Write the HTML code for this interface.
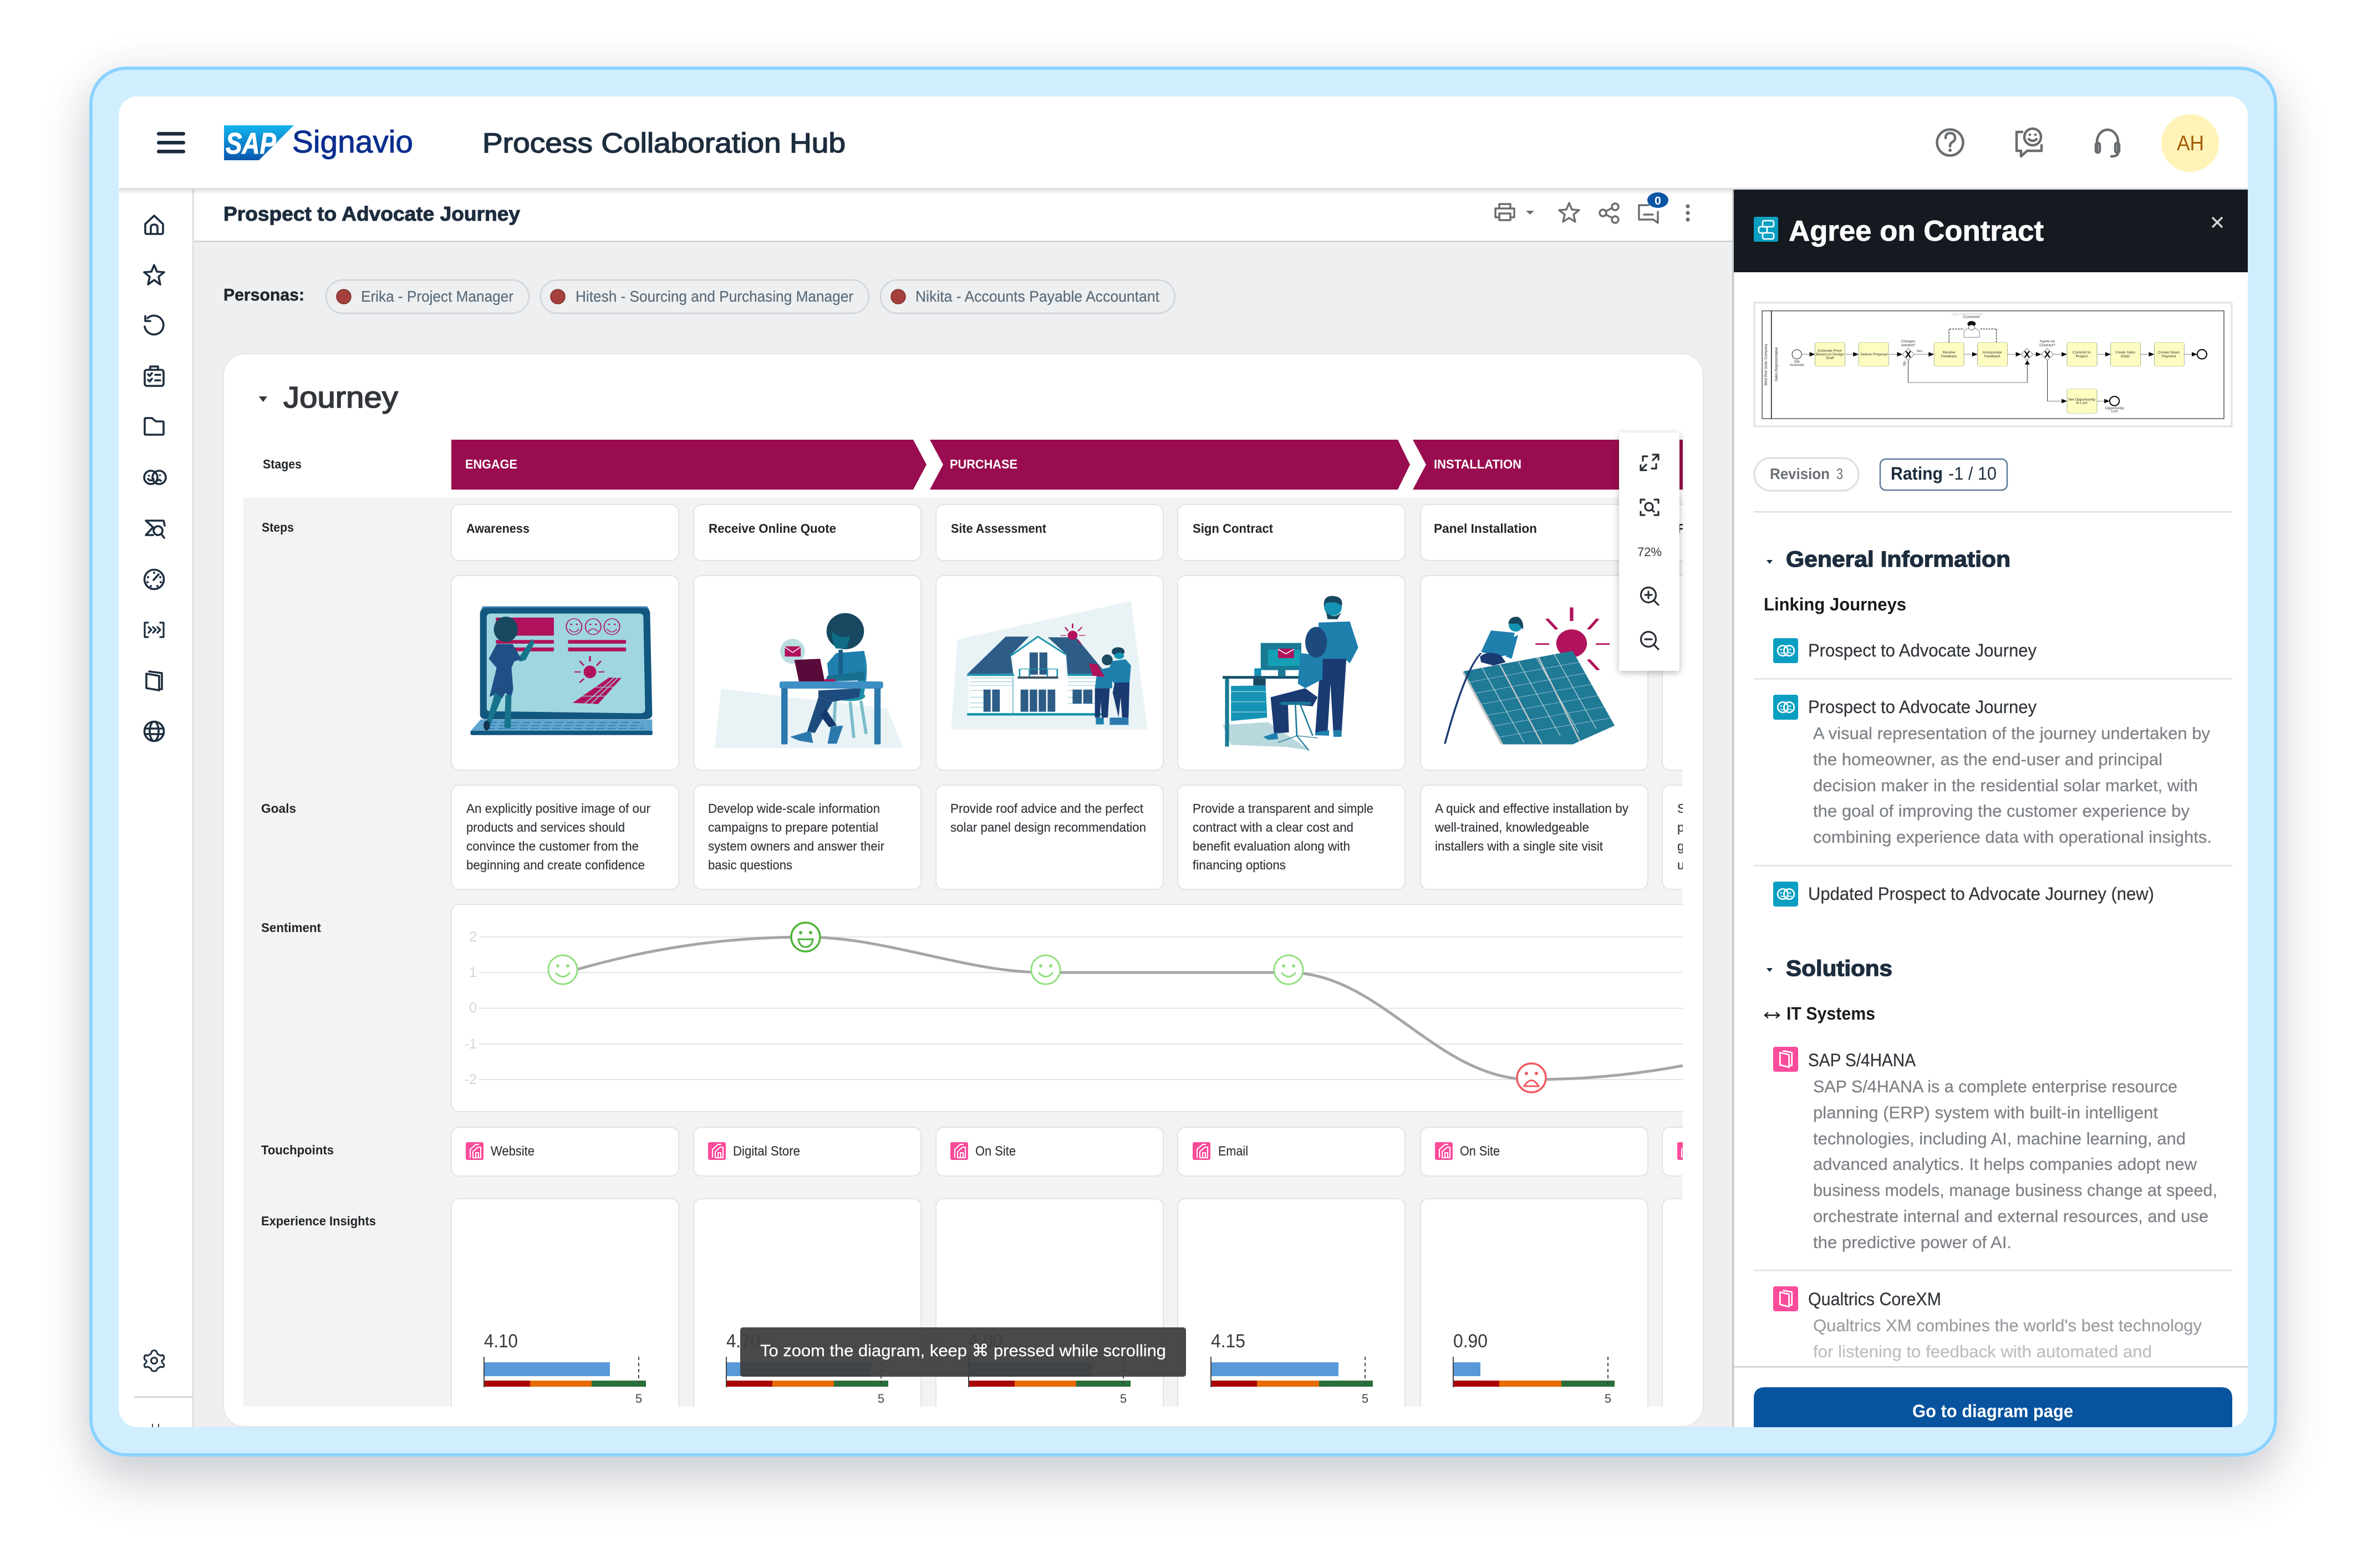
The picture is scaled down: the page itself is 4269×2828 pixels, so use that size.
<!DOCTYPE html>
<html lang="en"><head><meta charset="utf-8"><title>Process Collaboration Hub</title>
<style>
html,body{margin:0;padding:0;background:#fff;width:4269px;height:2828px;overflow:hidden}
#s{position:absolute;left:161px;top:120px;width:3946px;height:2507px;border-radius:66px;box-shadow:0 44px 90px rgba(60,70,85,.24),0 0 70px rgba(60,70,85,.08)}
svg{position:absolute;left:0;top:0}
text{font-family:"Liberation Sans","DejaVu Sans",sans-serif}
.b{font-weight:700}
.lab{font-size:23px;font-weight:700;fill:#1f2428}
.st{font-size:23px;font-weight:700;fill:#fff}
.step{font-size:23px;font-weight:700;fill:#1f2428}
.g{font-size:23px;fill:#32363a;stroke:#32363a;stroke-width:.2}
.tp{font-size:24px;fill:#32363a;stroke:#32363a;stroke-width:.2}
.v{font-size:34px;fill:#3a3a3a}
.five{font-size:22px;fill:#444;text-anchor:middle}
.ax{font-size:25px;fill:#d5d5d5;text-anchor:end}
.chip{font-size:28px;fill:#5b6b78;stroke:#5b6b78;stroke-width:.2}
.r{font-size:32px;fill:#32363a;stroke:#32363a;stroke-width:.25}
.d{font-size:31px;fill:#7d8186;stroke:#7d8186;stroke-width:.25}
.h2{font-size:40px;font-weight:700;fill:#1d2d3e;stroke:#1d2d3e;stroke-width:1.3}
.h3{font-size:32px;font-weight:700;fill:#1a1a1a}
.ic{fill:none;stroke:#1d2d3e;stroke-width:3.6;stroke-linecap:round;stroke-linejoin:round}
.tb{fill:none;stroke:#6a6d70;stroke-width:3.4;stroke-linecap:round;stroke-linejoin:round}
.fl{fill:none;stroke:#2a2f35;stroke-width:3.2;stroke-linecap:round;stroke-linejoin:round}
.dg{font-size:19px;fill:#333;text-anchor:middle}
.task{fill:#fdfdc2;stroke:#8e8e6e;stroke-width:1.2;vector-effect:non-scaling-stroke}
.ln{fill:none;stroke:#000;stroke-width:1.4;vector-effect:non-scaling-stroke}
.card{fill:#fff;stroke:#e3e3e3;stroke-width:2}
</style></head>
<body>
<div id="s"></div>
<svg xmlns="http://www.w3.org/2000/svg" width="4269" height="2828" viewBox="0 0 4269 2828">
<defs>
<linearGradient id="sap" x1="0" y1="0" x2="0" y2="1"><stop offset="0" stop-color="#12b4ee"/><stop offset="1" stop-color="#0a56ad"/></linearGradient>
<linearGradient id="hs" x1="0" y1="0" x2="0" y2="1"><stop offset="0" stop-color="#000" stop-opacity=".14"/><stop offset="1" stop-color="#000" stop-opacity="0"/></linearGradient>
<filter id="fs" x="-20%" y="-10%" width="140%" height="120%"><feDropShadow dx="0" dy="3" stdDeviation="6" flood-color="#000" flood-opacity=".28"/></filter>
<clipPath id="inner"><rect x="214" y="174" width="3840" height="2400" rx="34"/></clipPath>
<clipPath id="grid"><rect x="439" y="780" width="2596" height="1757"/></clipPath>
<clipPath id="pan"><polygon points="1075,565 1295,475 1380,805 1295,888 1155,888"/></clipPath>
<clipPath id="panelc"><rect x="3127" y="342" width="927" height="2123"/></clipPath>
<symbol id="jw" overflow="visible" viewBox="-22 -22 44 44"><g fill="none" stroke="#fff" stroke-width="2.6"><circle cx="-5" cy="0" r="9"/><circle cx="6" cy="0" r="9"/></g><g fill="#fff"><circle cx="-8" cy="-2" r="1.5"/><circle cx="-3" cy="-2" r="1.5"/><circle cx="8" cy="-2" r="1.5"/></g><path d="M-9 3q4 3 8 0M5 5q3-3 6 0" fill="none" stroke="#fff" stroke-width="1.6"/></symbol>
<symbol id="bk" overflow="visible" viewBox="-22 -22 44 44"><path d="M-10-12L6-8V14L-10 10ZM-5-15L11-12V11H6" fill="none" stroke="#fff" stroke-width="2.6" stroke-linejoin="round"/></symbol>
<symbol id="tp" overflow="visible" viewBox="-16 -16 32 32"><path d="M-8 12V-3L2-12H8M-3 12V1L6-7H11V12H-3ZM2 12V3H7V12" fill="none" stroke="#fff" stroke-width="2" stroke-linejoin="round"/></symbol>
<symbol id="fs1" overflow="visible" viewBox="-30 -30 60 60"><circle r="26" fill="#fff" stroke="#90e07e" stroke-width="3"/><circle cx="-9" cy="-7" r="3" fill="#90e07e"/><circle cx="9" cy="-7" r="3" fill="#90e07e"/><path d="M-13 5Q0 20 13 5" fill="none" stroke="#90e07e" stroke-width="3"/></symbol>
</defs>

<!-- frame -->
<rect x="164" y="123" width="3940" height="2501" rx="64" fill="#d1eeff" stroke="#8bd2ff" stroke-width="6"/>
<rect x="214" y="174" width="3840" height="2400" rx="34" fill="#fff"/>

<g clip-path="url(#inner)">
<!-- main background -->
<rect x="350" y="341" width="2777" height="2240" fill="#edeff1"/>
<rect x="347" y="341" width="2.5" height="2240" fill="#d9d9d9"/>
<!-- subheader -->
<rect x="350" y="341" width="2777" height="94" fill="#fff"/>
<rect x="350" y="434" width="2777" height="2.5" fill="#cfd0d1"/>
<text x="403" y="398" class="b" font-size="36" fill="#1d2d3e" stroke="#1d2d3e" stroke-width="1" textLength="535" lengthAdjust="spacingAndGlyphs">Prospect to Advocate Journey</text>
<!-- toolbar icons -->
<g class="tb" transform="translate(2714,383)"><path d="M-10-7V-15H10V-7M-10 9H-17V-7H17V9H10"/><rect x="-10" y="2" width="20" height="12"/></g>
<polygon points="2752,380 2767,380 2759.5,387" fill="#6a6d70"/>
<polygon class="tb" transform="translate(2830,384)" points="0,-18 5,-6 18,-5 8,3 11,16 0,9 -11,16 -8,3 -18,-5 -5,-6"/>
<g class="tb" transform="translate(2902,384)"><circle cx="-11" cy="0" r="6"/><circle cx="11" cy="-11" r="6"/><circle cx="11" cy="12" r="6"/><path d="M-6-3L6-9M-6 3L6 9"/></g>
<g class="tb" transform="translate(2973,384)"><path d="M-17 12V-14H0M-17 12H9L17 18V-2M9-14"/><path d="M-8 3H8"/></g>
<ellipse cx="2990" cy="361" rx="19" ry="14" fill="#0a55a6"/><text x="2990" y="369" text-anchor="middle" class="b" font-size="21" fill="#fff">0</text>
<g fill="#6a6d70"><circle cx="3044" cy="372" r="3.6"/><circle cx="3044" cy="384" r="3.6"/><circle cx="3044" cy="396" r="3.6"/></g>

<!-- personas -->
<text x="403" y="542" class="b" font-size="31" fill="#22272b" stroke="#22272b" stroke-width=".5" textLength="146" lengthAdjust="spacingAndGlyphs">Personas:</text>
<g fill="none" stroke="#d2d5d8" stroke-width="2.5"><rect x="588" y="505" width="366" height="60" rx="30"/><rect x="975" y="505" width="592" height="60" rx="30"/><rect x="1588" y="505" width="531" height="60" rx="30"/></g>
<g fill="#a5403d" stroke="#7f2f2d" stroke-width="1.5"><circle cx="620" cy="535" r="13"/><circle cx="1006" cy="535" r="13"/><circle cx="1620" cy="535" r="13"/></g>
<text x="651" y="544" class="chip" textLength="275" lengthAdjust="spacingAndGlyphs">Erika - Project Manager</text>
<text x="1038" y="544" class="chip" textLength="501" lengthAdjust="spacingAndGlyphs">Hitesh - Sourcing and Purchasing Manager</text>
<text x="1651" y="544" class="chip" textLength="440" lengthAdjust="spacingAndGlyphs">Nikita - Accounts Payable Accountant</text>

<!-- journey card -->
<rect x="403" y="638" width="2669" height="1935" rx="38" fill="#fff" stroke="#e4e5e6" stroke-width="2"/>
<polygon points="467,715 482,715 474.5,725" fill="#32363a"/>
<text x="511" y="735" font-size="54" fill="#32363a" stroke="#32363a" stroke-width="1.6" textLength="207" lengthAdjust="spacingAndGlyphs">Journey</text>
<text x="474" y="845" class="lab" textLength="70" lengthAdjust="spacingAndGlyphs">Stages</text>

<g clip-path="url(#grid)">
<rect x="439" y="897" width="2596" height="1640" fill="#f3f3f3"/>
<polygon points="814,793 1647,793 1671,838 1647,883 814,883" fill="#990c4f"/>
<polygon points="1677,793 2521,793 2543,838 2521,883 1677,883 1701,838" fill="#990c4f"/>
<polygon points="2548,793 3040,793 3040,883 2548,883 2572,838" fill="#990c4f"/>
<text x="839" y="845" class="st" textLength="94" lengthAdjust="spacingAndGlyphs">ENGAGE</text>
<text x="1713" y="845" class="st" textLength="122" lengthAdjust="spacingAndGlyphs">PURCHASE</text>
<text x="2586" y="845" class="st" textLength="158" lengthAdjust="spacingAndGlyphs">INSTALLATION</text>

<text x="472" y="959" class="lab" textLength="58" lengthAdjust="spacingAndGlyphs">Steps</text>
<text x="471" y="1466" class="lab" textLength="63" lengthAdjust="spacingAndGlyphs">Goals</text>
<text x="471" y="1681" class="lab" textLength="108" lengthAdjust="spacingAndGlyphs">Sentiment</text>
<text x="471" y="2082" class="lab" textLength="131" lengthAdjust="spacingAndGlyphs">Touchpoints</text>
<text x="471" y="2210" class="lab" textLength="207" lengthAdjust="spacingAndGlyphs">Experience Insights</text>

<!-- step cards -->
<g class="card">
<rect x="814" y="910" width="410" height="101" rx="14"/><rect x="1251" y="910" width="410" height="101" rx="14"/><rect x="1688" y="910" width="410" height="101" rx="14"/><rect x="2124" y="910" width="410" height="101" rx="14"/><rect x="2562" y="910" width="410" height="101" rx="14"/><rect x="2998" y="910" width="410" height="101" rx="14"/>
<rect x="814" y="1038" width="410" height="351" rx="14"/><rect x="1251" y="1038" width="410" height="351" rx="14"/><rect x="1688" y="1038" width="410" height="351" rx="14"/><rect x="2124" y="1038" width="410" height="351" rx="14"/><rect x="2562" y="1038" width="410" height="351" rx="14"/><rect x="2998" y="1038" width="410" height="351" rx="14"/>
<rect x="814" y="1416" width="410" height="188" rx="14"/><rect x="1251" y="1416" width="410" height="188" rx="14"/><rect x="1688" y="1416" width="410" height="188" rx="14"/><rect x="2124" y="1416" width="410" height="188" rx="14"/><rect x="2562" y="1416" width="410" height="188" rx="14"/><rect x="2998" y="1416" width="410" height="188" rx="14"/>
<rect x="814" y="1631" width="2300" height="374" rx="14"/>
<rect x="814" y="2033" width="410" height="88" rx="14"/><rect x="1251" y="2033" width="410" height="88" rx="14"/><rect x="1688" y="2033" width="410" height="88" rx="14"/><rect x="2124" y="2033" width="410" height="88" rx="14"/><rect x="2562" y="2033" width="410" height="88" rx="14"/><rect x="2998" y="2033" width="410" height="88" rx="14"/>
<rect x="814" y="2162" width="410" height="420" rx="14"/><rect x="1251" y="2162" width="410" height="420" rx="14"/><rect x="1688" y="2162" width="410" height="420" rx="14"/><rect x="2124" y="2162" width="410" height="420" rx="14"/><rect x="2562" y="2162" width="410" height="420" rx="14"/><rect x="2998" y="2162" width="410" height="420" rx="14"/>
</g>
<text x="841" y="961" class="step" textLength="114" lengthAdjust="spacingAndGlyphs">Awareness</text>
<text x="1278" y="961" class="step" textLength="230" lengthAdjust="spacingAndGlyphs">Receive Online Quote</text>
<text x="1715" y="961" class="step" textLength="172" lengthAdjust="spacingAndGlyphs">Site Assessment</text>
<text x="2151" y="961" class="step" textLength="145" lengthAdjust="spacingAndGlyphs">Sign Contract</text>
<text x="2586" y="961" class="step" textLength="186" lengthAdjust="spacingAndGlyphs">Panel Installation</text>
<text x="3025" y="961" class="step">F</text>

<!-- illustration 1 -->
<g transform="translate(800,780) scale(.63776,.40816)">
<polygon points="112,768 575,768 582,780 105,780" fill="#3d84b0"/>
<path d="M125 775H565Q584 775 584 800L590 1245Q590 1267 570 1267H120Q103 1267 103 1245V800Q103 775 125 775Z" fill="#125780"/>
<path d="M135 800H552Q565 800 565 815L570 1225Q570 1241 555 1241L135 1232Q122 1232 122 1220V815Q122 800 135 800Z" fill="#9fd6e0"/>
<polygon points="105,1268 590,1268 590,1320 76,1320" fill="#5ea5d0"/>
<rect x="76" y="1318" width="515" height="19" rx="5" fill="#125780"/>
<g stroke="#2f6f99" stroke-width="3" stroke-dasharray="22 9"><path d="M130 1282H565M125 1295H565M122 1308H565"/></g>
<g fill="#b0125b"><rect x="148" y="818" width="164" height="80" rx="3"/><rect x="148" y="917" width="164" height="16" rx="2"/><rect x="148" y="950" width="164" height="17" rx="2"/><rect x="352" y="917" width="164" height="16" rx="2"/><rect x="352" y="950" width="164" height="17" rx="2"/><ellipse cx="414" cy="1058" rx="18" ry="28"/></g>
<g fill="none" stroke="#b0125b" stroke-width="3"><ellipse cx="369" cy="858" rx="22" ry="35"/><ellipse cx="423" cy="858" rx="22" ry="35"/><ellipse cx="476" cy="858" rx="22" ry="35"/><path d="M355 868Q369 895 383 868M409 880Q423 855 437 880M462 868Q476 895 490 868"/></g>
<g fill="#b0125b"><circle cx="361" cy="848" r="3"/><circle cx="377" cy="848" r="3"/><circle cx="415" cy="848" r="3"/><circle cx="431" cy="848" r="3"/><circle cx="468" cy="848" r="3"/><circle cx="484" cy="848" r="3"/></g>
<g stroke="#b0125b" stroke-width="5" fill="none"><path d="M414 988V1012M445 1010L433 1030M385 1010L397 1030M370 1058H388M438 1058H455M385 1105L397 1088"/></g>
<polygon points="365,1195 437,1200 503,1085 468,1083" fill="#b0125b"/>
<g stroke="#9fd6e0" stroke-width="3"><path d="M398 1200L482 1084M417 1200L493 1084M386 1165L475 1165M404 1125L490 1125"/></g>
<path d="M208 1005L250 912L257 930L232 1005L218 1012Z" fill="#17748a"/>
<polygon points="150,935 195,935 220,1000 200,1012 192,1040 150,1040 128,1000" fill="#1f4f85"/>
<polygon points="150,1040 192,1040 197,1135 190,1178 175,1150 165,1175 150,1155 130,1168" fill="#1f4f85"/>
<polygon points="145,1150 118,1300 130,1300 165,1172" fill="#17748a"/>
<polygon points="175,1160 172,1300 190,1300 192,1160" fill="#17748a"/>
<ellipse cx="122" cy="1295" rx="9" ry="22" fill="#14344f"/><ellipse cx="181" cy="1298" rx="10" ry="10" fill="#17748a"/>
<ellipse cx="176" cy="870" rx="34" ry="56" fill="#17485f"/>
</g>

<!-- illustration 2 -->
<g transform="translate(800,780) scale(.63776,.40816)">
<polygon points="785,1132 1255,1220 1300,1395 767,1395" fill="#e9f3f6"/>
<g stroke="#7dbdc8" stroke-width="9" fill="none"><path d="M1108 1185L1104 1295M1150 1190L1160 1350M1180 1185L1195 1332"/></g>
<ellipse cx="1150" cy="1165" rx="42" ry="22" fill="#1f8fa8"/>
<path d="M1190 975Q1205 1040 1188 1160L1170 1165L1175 975Z" fill="#1f8fa8"/>
<polygon points="1110,975 1190,965 1195,1095 1090,1100 1085,1020" fill="#1f7fad"/>
<path d="M1123 960V1095" stroke="#1a5f8a" stroke-width="12"/>
<path d="M1085 1075L1190 1055V1095L1080 1100Z" fill="#176f8f"/>
<polygon points="1060,1140 1180,1130 1175,1170 1100,1190 1060,1170" fill="#1d4b7e"/>
<polygon points="1060,1170 1028,1322 1050,1328 1100,1190" fill="#1d4b7e"/>
<polygon points="1080,1220 1112,1295 1090,1302 1065,1250" fill="#153a6e"/>
<polygon points="980,1345 1038,1318 1045,1372 1005,1362" fill="#2b78ad"/>
<polygon points="1095,1300 1130,1295 1112,1375 1086,1375" fill="#2b78ad"/>
<rect x="950" y="1100" width="293" height="32" rx="8" fill="#3d8fc6"/>
<rect x="955" y="1130" width="18" height="248" rx="3" fill="#2b78ad"/><rect x="1218" y="1130" width="18" height="248" rx="3" fill="#2b78ad"/>
<ellipse cx="987" cy="967" rx="35" ry="55" fill="#b9dde0"/>
<rect x="965" y="945" width="45" height="45" rx="3" fill="#b0125b"/><path d="M965 948L987 972L1010 948" fill="none" stroke="#fff" stroke-width="3"/>
<polygon points="992,1005 1065,1000 1078,1100 1005,1100" fill="#5a0a3a"/>
<rect x="1078" y="1090" width="30" height="10" fill="#b0125b"/>
<ellipse cx="1136" cy="878" rx="53" ry="80" fill="#17485f"/>
<path d="M1098 880Q1125 915 1150 900L1140 955H1110Q1098 930 1098 880Z" fill="#0f6e85"/>
</g>

<!-- illustration 3 -->
<g transform="translate(1680,980) scale(.89286,.40816)">
<polygon points="52,425 403,255 436,822 40,822" fill="#e9f3f6"/>
<rect x="75" y="578" width="265" height="172" fill="#fff"/>
<polygon points="165,490 215,410 270,490 270,750 165,750" fill="#fff"/>
<g stroke="#9fcdd8" stroke-width="3"><path d="M78 595H165M78 612H165M78 628H165M78 650H105M78 680H105M78 705H105M78 725H105M275 595H340M275 612H340M275 628H340M275 650H285M275 680H285M275 708H340"/></g>
<polygon points="150,412 197,412 160,495 165,575 72,578" fill="#2d5c87"/>
<polygon points="235,415 292,415 345,555 345,580 275,578 272,490" fill="#2d5c87"/>
<path d="M160 497L215 412L272 492" fill="none" stroke="#2096b0" stroke-width="5"/>
<rect x="72" y="576" width="95" height="10" fill="#2096b0"/><rect x="275" y="576" width="65" height="10" fill="#2096b0"/>
<rect x="198" y="482" width="36" height="98" fill="#2d5c87"/><rect x="215" y="482" width="3" height="98" fill="#fff"/>
<path d="M178 555H254M178 555V590M254 555V590M198 555V590M234 555V590" stroke="#2096b0" stroke-width="3" fill="none"/><rect x="174" y="588" width="82" height="10" fill="#456"/>
<g fill="#2d5c87"><rect x="105" y="646" width="33" height="98"/><rect x="180" y="646" width="70" height="98"/><rect x="285" y="646" width="40" height="62"/></g>
<g stroke="#fff" stroke-width="3"><path d="M121 646V744M197 646V744M215 646V744M233 646V744M305 646V708"/></g>
<rect x="72" y="750" width="285" height="11" fill="#1a94ad"/><rect x="163" y="590" width="3" height="160" fill="#9fcdd8"/>
<ellipse cx="285" cy="406" rx="10" ry="20" fill="#b0125b"/>
<g stroke="#b0125b" stroke-width="3"><path d="M285 354V375M270 370L276 388M304 370L296 388M261 407H272M298 407H310M295 425L302 445"/></g>
<ellipse cx="355" cy="515" rx="11" ry="24" fill="#1c4a60"/>
<polygon points="335,560 365,545 365,640 330,640" fill="#1f7fad"/>
<polygon points="330,640 360,640 356,770 344,770 342,700 340,770 330,770" fill="#1a3a72"/>
<rect x="332" y="770" width="16" height="30" fill="#1f7fad"/>
<polygon points="318,530 335,535 350,590 325,585" fill="#b0125b"/>
<polygon points="365,520 392,512 403,540 400,618 368,618 355,570" fill="#1f7fad"/>
<polygon points="370,615 400,615 398,770 385,770 382,680 378,770 366,660" fill="#1a3a72"/>
<ellipse cx="377" cy="478" rx="13" ry="19" fill="#17485f"/><ellipse cx="379" cy="497" rx="10" ry="14" fill="#1593b5"/>
<rect x="360" y="770" width="38" height="32" fill="#2b78ad"/>
</g>

<!-- illustration 4 -->
<g transform="translate(1680,980) scale(.89286,.40816)">
<polygon points="588,802 680,790 765,915 718,900 605,890" fill="#b9d8de"/>
<polygon points="782,350 845,345 862,460 845,530 835,510 780,510" fill="#1f7fad"/>
<polygon points="786,510 838,510 828,850 812,850 806,620 800,835 775,845" fill="#1a3a72"/>
<ellipse cx="811" cy="280" rx="18" ry="40" fill="#1593b5"/><path d="M793 280Q790 232 810 232Q832 235 829 275L815 260L797 262Z" fill="#17485f"/><path d="M797 300Q810 340 828 305L820 335H800Z" fill="#17485f"/>
<polygon points="775,835 803,825 803,850 775,848" fill="#1f7fad"/><rect x="812" y="825" width="16" height="30" fill="#1f7fad"/>
<rect x="665" y="440" width="82" height="120" fill="#1a7a96"/><rect x="680" y="470" width="65" height="72" fill="#14a0b5"/>
<rect x="700" y="465" width="32" height="42" fill="#b0125b"/><path d="M700 468L716 488L732 468" stroke="#fff" stroke-width="3" fill="none"/>
<rect x="700" y="558" width="15" height="28" fill="#1a7a96"/><rect x="652" y="552" width="14" height="36" rx="3" fill="#1593b5"/>
<rect x="588" y="586" width="160" height="12" fill="#17546e"/>
<rect x="593" y="598" width="8" height="300" fill="#1a7a96"/>
<polygon points="605,630 675,628 678,770 605,785" fill="#1593b5"/><g stroke="#9fd6e0" stroke-width="3"><path d="M605 655H675M605 700H675M605 745H675"/></g>
<polygon points="650,598 675,598 675,628 650,628" fill="#17485f"/>
<polygon points="745,485 790,495 790,600 755,640 740,620" fill="#1f7fad"/>
<polygon points="685,680 755,640 780,680 770,720 720,710 722,835 692,840" fill="#1a3a72"/>
<polygon points="670,855 698,835 700,865 680,868" fill="#1f7fad"/>
<ellipse cx="777" cy="437" rx="22" ry="68" fill="#1c4a7c"/>
<rect x="705" y="700" width="62" height="14" rx="5" fill="#1a7a96"/>
<g stroke="#1a7a96" stroke-width="3" fill="none"><path d="M735 712L738 850L700 880M738 850L780 860M738 850L762 915M745 712L770 850"/></g>
</g>

<!-- illustration 5 -->
<g transform="translate(1680,980) scale(.89286,.40816)">
<ellipse cx="1293" cy="442" rx="31" ry="62" fill="#b0125b"/>
<g stroke="#b0125b" stroke-width="7" fill="none"><path d="M1293 283V343M1346 333L1327 380M1243 333L1263 380M1220 445H1248M1342 445H1370M1327 513L1347 560"/></g>
<polygon points="1072,570 1075,565 1155,888 1150,888" fill="#c3c3c3"/>
<polygon points="1075,565 1295,475 1380,805 1295,888 1155,888" fill="#1f7a96"/>
<g clip-path="url(#pan)" stroke="#b9d3da" fill="none"><g stroke-width="1.6"><path d="M1087 613L1308 525M1099 662L1320 574M1111 710L1333 623M1123 759L1346 673M1135 807L1359 722M1147 856L1371 772M1112 550L1197 880M1185 520L1270 850M1222 505L1307 835M1258 490L1343 820"/></g><path d="M1148 535L1233 885M1226 503L1311 880" stroke-width="3" stroke="#c9c9c9"/></g>
<polygon points="1130,385 1178,395 1168,490 1150,500 1110,480" fill="#1f7fad"/>
<polygon points="1170,420 1185,405 1172,510 1160,500" fill="#1f7fad"/>
<path d="M1108 500Q1125 470 1150 495L1160 525L1135 540L1110 525Z" fill="#1a3a72"/>
<ellipse cx="1180" cy="360" rx="14" ry="30" fill="#1593b5"/><path d="M1165 355Q1168 320 1185 325Q1197 340 1195 380L1185 355Z" fill="#17485f"/>
<path d="M1037 885C1060 700 1085 540 1110 485" fill="none" stroke="#1a3a72" stroke-width="4"/>
</g>

<!-- goals -->
<g class="g">
<text x="841" y="1466" textLength="332" lengthAdjust="spacingAndGlyphs">An explicitly positive image of our</text>
<text x="841" y="1500" textLength="286" lengthAdjust="spacingAndGlyphs">products and services should</text>
<text x="841" y="1534" textLength="311" lengthAdjust="spacingAndGlyphs">convince the customer from the</text>
<text x="841" y="1568" textLength="322" lengthAdjust="spacingAndGlyphs">beginning and create confidence</text>
<text x="1277" y="1466" textLength="310" lengthAdjust="spacingAndGlyphs">Develop wide-scale information</text>
<text x="1277" y="1500" textLength="307" lengthAdjust="spacingAndGlyphs">campaigns to prepare potential</text>
<text x="1277" y="1534" textLength="318" lengthAdjust="spacingAndGlyphs">system owners and answer their</text>
<text x="1277" y="1568" textLength="152" lengthAdjust="spacingAndGlyphs">basic questions</text>
<text x="1714" y="1466" textLength="348" lengthAdjust="spacingAndGlyphs">Provide roof advice and the perfect</text>
<text x="1714" y="1500" textLength="353" lengthAdjust="spacingAndGlyphs">solar panel design recommendation</text>
<text x="2151" y="1466" textLength="326" lengthAdjust="spacingAndGlyphs">Provide a transparent and simple</text>
<text x="2151" y="1500" textLength="290" lengthAdjust="spacingAndGlyphs">contract with a clear cost and</text>
<text x="2151" y="1534" textLength="284" lengthAdjust="spacingAndGlyphs">benefit evaluation along with</text>
<text x="2151" y="1568" textLength="168" lengthAdjust="spacingAndGlyphs">financing options</text>
<text x="2588" y="1466" textLength="349" lengthAdjust="spacingAndGlyphs">A quick and effective installation by</text>
<text x="2588" y="1500" textLength="278" lengthAdjust="spacingAndGlyphs">well-trained, knowledgeable</text>
<text x="2588" y="1534" textLength="303" lengthAdjust="spacingAndGlyphs">installers with a single site visit</text>
<text x="3025" y="1466">S</text><text x="3025" y="1500">p</text><text x="3025" y="1534">g</text><text x="3025" y="1568">u</text>
</g>

<!-- sentiment -->
<g stroke="#e4e4e4" stroke-width="2"><path d="M864 1690H3035M864 1754H3035M864 1818.5H3035M864 1883H3035M864 1947H3035"/></g>
<text x="860" y="1698" class="ax">2</text><text x="860" y="1762" class="ax">1</text><text x="860" y="1826" class="ax">0</text><text x="860" y="1891" class="ax">-1</text><text x="860" y="1955" class="ax">-2</text>
<path d="M1015 1756C1160 1712 1300 1690 1453 1690C1600 1690 1740 1754 1886 1754L2324 1754C2490 1754 2590 1947 2762 1947C2860 1947 2950 1938 3035 1922" fill="none" stroke="#a6a6a6" stroke-width="5"/>
<use href="#fs1" x="985" y="1719" width="60" height="60"/>
<use href="#fs1" x="1856" y="1719" width="60" height="60"/>
<use href="#fs1" x="2294" y="1719" width="60" height="60"/>
<g transform="translate(1453,1690)"><circle r="26" fill="#fff" stroke="#4db339" stroke-width="3.5"/><circle cx="-9" cy="-8" r="3" fill="#4db339"/><circle cx="9" cy="-8" r="3" fill="#4db339"/><path d="M-13 4H13Q11 18 0 18Q-11 18-13 4Z" fill="#fff" stroke="#4db339" stroke-width="3"/></g>
<g transform="translate(2762,1944)"><circle r="26" fill="#fff" stroke="#f0595f" stroke-width="3.5"/><circle cx="-9" cy="-8" r="3" fill="#f0595f"/><circle cx="9" cy="-8" r="3" fill="#f0595f"/><path d="M-13 15Q0-6 13 15Z" fill="#fff" stroke="#f0595f" stroke-width="3"/></g>

<!-- touchpoints -->
<g fill="#fb4b9b"><rect x="840" y="2060" width="32" height="32" rx="3"/><rect x="1277" y="2060" width="32" height="32" rx="3"/><rect x="1714" y="2060" width="32" height="32" rx="3"/><rect x="2151" y="2060" width="32" height="32" rx="3"/><rect x="2588" y="2060" width="32" height="32" rx="3"/><rect x="3025" y="2060" width="32" height="32" rx="3"/></g>
<use href="#tp" x="840" y="2060" width="32" height="32"/><use href="#tp" x="1277" y="2060" width="32" height="32"/><use href="#tp" x="1714" y="2060" width="32" height="32"/><use href="#tp" x="2151" y="2060" width="32" height="32"/><use href="#tp" x="2588" y="2060" width="32" height="32"/><use href="#tp" x="3025" y="2060" width="32" height="32"/>
<text x="885" y="2084" class="tp" textLength="79" lengthAdjust="spacingAndGlyphs">Website</text>
<text x="1322" y="2084" class="tp" textLength="121" lengthAdjust="spacingAndGlyphs">Digital Store</text>
<text x="1759" y="2084" class="tp" textLength="73" lengthAdjust="spacingAndGlyphs">On Site</text>
<text x="2197" y="2084" class="tp" textLength="54" lengthAdjust="spacingAndGlyphs">Email</text>
<text x="2633" y="2084" class="tp" textLength="72" lengthAdjust="spacingAndGlyphs">On Site</text>

<!-- insights -->
<g id="ins">
<text x="873" y="2430" class="v" textLength="61" lengthAdjust="spacingAndGlyphs">4.10</text>
<text x="1310" y="2430" class="v" textLength="61" lengthAdjust="spacingAndGlyphs">4.70</text>
<text x="1747" y="2430" class="v" textLength="61" lengthAdjust="spacingAndGlyphs">4.00</text>
<text x="2184" y="2430" class="v" textLength="62" lengthAdjust="spacingAndGlyphs">4.15</text>
<text x="2621" y="2430" class="v" textLength="62" lengthAdjust="spacingAndGlyphs">0.90</text>
<g fill="#5899da"><rect x="873" y="2457" width="227" height="25"/><rect x="1310" y="2457" width="261" height="25"/><rect x="1747" y="2457" width="223" height="25"/><rect x="2184" y="2457" width="230" height="25"/><rect x="2621" y="2457" width="49" height="25"/></g>
<g fill="#a90505"><rect x="873" y="2490" width="83" height="11"/><rect x="1310" y="2490" width="83" height="11"/><rect x="1747" y="2490" width="83" height="11"/><rect x="2184" y="2490" width="83" height="11"/><rect x="2621" y="2490" width="83" height="11"/></g>
<g fill="#e66b00"><rect x="956" y="2490" width="111" height="11"/><rect x="1393" y="2490" width="111" height="11"/><rect x="1830" y="2490" width="111" height="11"/><rect x="2267" y="2490" width="112" height="11"/><rect x="2704" y="2490" width="112" height="11"/></g>
<g fill="#2a6e3a"><rect x="1067" y="2490" width="98" height="11"/><rect x="1504" y="2490" width="98" height="11"/><rect x="1941" y="2490" width="98" height="11"/><rect x="2379" y="2490" width="97" height="11"/><rect x="2816" y="2490" width="96" height="11"/></g>
<g stroke="#444" stroke-width="2"><path d="M873 2447V2502M1310 2447V2502M1747 2447V2502M2184 2447V2502M2621 2447V2502"/><path stroke-dasharray="6 5" d="M1152 2447V2502M1589 2447V2502M2026 2447V2502M2462 2447V2502M2900 2447V2502"/></g>
<text x="1152" y="2530" class="five">5</text><text x="1589" y="2530" class="five">5</text><text x="2026" y="2530" class="five">5</text><text x="2462" y="2530" class="five">5</text><text x="2900" y="2530" class="five">5</text>
</g>
</g>

<!-- floating toolbar -->
<rect x="2920" y="780" width="109" height="430" rx="3" fill="#fff" filter="url(#fs)"/>
<g class="fl" transform="translate(2975,834)"><path d="M-4-11H-12V-3M4 11H12V3M6-14H16V-5M16-14L6-4M-6 14H-16V5M-16 14L-6 4"/></g>
<g class="fl" transform="translate(2975,915)"><path d="M-9-14H-16V-8M9-14H16V-8M-9 14H-16V8M9 14H16V8"/><circle r="7" cy="-1" cx="-1"/><path d="M4 4L8 8"/></g>
<text x="2975" y="1003" text-anchor="middle" font-size="22" fill="#32363a" textLength="44" lengthAdjust="spacingAndGlyphs">72%</text>
<g class="fl" transform="translate(2975,1075)"><circle cx="-2" cy="-2" r="13.5"/><path d="M8 8L16 16M-2-8V4M-8-2H4"/></g>
<g class="fl" transform="translate(2975,1155)"><circle cx="-2" cy="-2" r="13.5"/><path d="M8 8L16 16M-8-2H4"/></g>

<!-- tooltip -->
<rect x="1335" y="2394" width="804" height="89" rx="5" fill="#3f3f3f" fill-opacity=".95"/>
<text x="1371" y="2446" font-size="30" fill="#fff" stroke="#fff" stroke-width=".25" textLength="732" lengthAdjust="spacingAndGlyphs">To zoom the diagram, keep ⌘ pressed while scrolling</text>

<!-- sidebar -->
<g class="ic">
<g transform="translate(278,405)"><path d="M-16-1L0-16L16-1V14Q16 17 13 17H-13Q-16 17-16 14ZM-6 17V5Q-6 0 0 0Q6 0 6 5V17"/></g>
<polygon transform="translate(278,496)" points="0,-18 5,-6 18,-5 8,3 11,17 0,9 -11,17 -8,3 -18,-5 -5,-6"/>
<g transform="translate(278,587)"><path d="M-12-13A17 17 0 1 1-17 2M-16-17V-8H-7"/></g>
<g transform="translate(278,678)"><rect x="-17" y="-11" width="34" height="29" rx="4"/><path d="M-7-11V-17H7V-11M-11-3L-8 0L-4-5M2-2H11M-11 7L-8 10L-4 5M2 8H11"/></g>
<g transform="translate(278,769)"><path d="M-17-13Q-17-15-15-15H-4L3-9H15Q17-9 17-7V13Q17 15 15 15H-15Q-17 15-17 13Z"/></g>
<g transform="translate(279,861)"><circle cx="-7" r="12"/><circle cx="8" r="12"/><path d="M-12 3Q-7 8-2 3M5 6Q8 3 11 6"/><path d="M-11-3H-10M-4-3H-3M9-4H10" stroke-width="3"/></g>
<g transform="translate(279,954)"><path d="M16-15H-16L-3-3L-16 11H-3M16-15L18-6"/><circle cx="6" cy="3" r="8"/><path d="M12 9L17 16"/></g>
<g transform="translate(278,1045)"><circle r="17.5"/><path d="M-1 1L8-9"/><path d="M0-12V-12M-11-4V-4M11-4V-4M-12 5V5M12 5V5M-6 12V12M6 12V12" stroke-width="4"/></g>
<g transform="translate(278,1136)" stroke-width="3.2"><path d="M-11-13H-17V13H-11M11-13H17V13H11M-10-5L-5 0L-10 5M-2-5L3 0L-2 5M6-5L11 0L6 5"/></g>
<g transform="translate(278,1228)"><path d="M-14-13L9-9V17L-14 13ZM-9-17L14-14V15H9"/></g>
<g transform="translate(278,1319)"><circle r="17.5"/><ellipse rx="8" ry="17.5"/><path d="M-17-5H17M-17 5H17"/></g>
<g transform="translate(278,2454)" stroke-width="3"><path d="M-4-17Q0-20 4-17L6-12Q9-11 11-9L16-10Q19-6 17-2L14 0Q14 2 14 3L17 6Q19 9 16 12L11 11Q9 13 6 14L4 18Q0 20-4 18L-6 14Q-9 13-11 11L-16 12Q-19 9-17 6L-14 3Q-14 1-14 0L-17-2Q-19-6-16-10L-11-9Q-9-11-6-12Z"/><circle r="5.5"/></g>
</g>
<rect x="242" y="2518" width="106" height="3" fill="#d4d4d4"/>
<path d="M275 2574V2568M286 2574V2568" stroke="#444" stroke-width="2"/>

<!-- right panel -->
<rect x="3127" y="342" width="930" height="2240" fill="#fff"/>
<rect x="3124" y="342" width="3.5" height="2240" fill="#c9c9c9"/>
<rect x="3127" y="342" width="930" height="149" fill="#141a20"/>
<rect x="3163" y="391" width="44" height="45" rx="3" fill="#0a9fc2"/>
<g fill="none" stroke="#fff" stroke-width="2.6" stroke-linejoin="round"><rect x="3179" y="398" width="20" height="11" rx="3"/><rect x="3172" y="409" width="15" height="11" rx="3"/><rect x="3179" y="420" width="20" height="11" rx="3"/></g>
<text x="3226" y="434" class="b" font-size="52" fill="#fff" stroke="#fff" stroke-width=".8" textLength="460" lengthAdjust="spacingAndGlyphs">Agree on Contract</text>
<path d="M3990 392L4008 410M4008 392L3990 410" stroke="#d8d8d8" stroke-width="3.4"/>

<!-- diagram -->
<rect x="3164" y="546" width="861" height="223" fill="#fff" stroke="#e1e1e1" stroke-width="3"/>
<g transform="translate(3150,520) scale(.574,.33333)">
<rect x="49" y="122" width="1451" height="583" fill="#fff" stroke="#555" stroke-width="1.5" vector-effect="non-scaling-stroke"/>
<path d="M78 122V705" class="ln" stroke="#555"/>
<ellipse cx="158" cy="357" rx="15" ry="25" fill="#fff" stroke="#222" stroke-width="1" vector-effect="non-scaling-stroke"/>
<ellipse cx="1431" cy="357" rx="15" ry="25" fill="#fff" stroke="#000" stroke-width="2" vector-effect="non-scaling-stroke"/>
<ellipse cx="1156" cy="610" rx="15" ry="25" fill="#fff" stroke="#000" stroke-width="2" vector-effect="non-scaling-stroke"/>
<g class="ln">
<path d="M173 357H215M309 357H352M446 357H490M527 357H589M683 357H726M820 357H863M900 357H926M964 357H1007M1101 357H1144M1238 357H1281M1375 357H1416M508 390V510H882V392M945 390V610H1007M1101 610H1141"/>
</g>
<g fill="#000"><polygon points="198,345 215,357 198,369"/><polygon points="335,345 352,357 335,369"/><polygon points="473,345 490,357 473,369"/><polygon points="572,345 589,357 572,369"/><polygon points="709,345 726,357 709,369"/><polygon points="846,345 863,357 846,369"/><polygon points="909,345 926,357 909,369"/><polygon points="990,345 1007,357 990,369"/><polygon points="1127,345 1144,357 1127,369"/><polygon points="1264,345 1281,357 1264,369"/><polygon points="1399,345 1416,357 1399,369"/><polygon points="990,598 1007,610 990,622"/><polygon points="1124,598 1141,610 1124,622"/><polygon points="874,412 882,390 890,412"/></g>
<g class="task"><rect x="215" y="292" width="94" height="130" rx="8"/><rect x="352" y="292" width="94" height="130" rx="8"/><rect x="589" y="292" width="94" height="130" rx="8"/><rect x="726" y="292" width="94" height="130" rx="8"/><rect x="1007" y="292" width="94" height="130" rx="8"/><rect x="1144" y="292" width="94" height="130" rx="8"/><rect x="1281" y="292" width="94" height="130" rx="8"/><rect x="1007" y="545" width="94" height="131" rx="8"/></g>
<g fill="#fff" stroke="#888" stroke-width="1"><polygon points="508,325 527,357 508,390 489,357" vector-effect="non-scaling-stroke"/><polygon points="881,325 900,357 881,390 862,357" vector-effect="non-scaling-stroke"/><polygon points="945,325 964,357 945,390 926,357" vector-effect="non-scaling-stroke"/></g>
<g stroke="#000" stroke-width="2.2"><path d="M501 340L515 374M515 340L501 374M874 340L888 374M888 340L874 374M938 340L952 374M952 340L938 374" vector-effect="non-scaling-stroke"/></g>
<path d="M636 292V220H683M785 292V220H732" fill="none" stroke="#000" stroke-width="1.2" stroke-dasharray="3 2" vector-effect="non-scaling-stroke"/>
<path d="M683 265V235Q690 215 707 215Q725 215 732 235V265Z" fill="#fff" stroke="#888" stroke-width="1" vector-effect="non-scaling-stroke"/>
<ellipse cx="707" cy="192" rx="13" ry="15" fill="#111"/><ellipse cx="707" cy="212" rx="10" ry="14" fill="#fff" stroke="#555" stroke-width=".8" vector-effect="non-scaling-stroke"/>
<g class="dg">
<text x="262" y="343" textLength="75" lengthAdjust="spacingAndGlyphs">Estimate Price</text><text x="262" y="363" textLength="88" lengthAdjust="spacingAndGlyphs">Based on Design</text><text x="262" y="383" textLength="25" lengthAdjust="spacingAndGlyphs">Draft</text>
<text x="400" y="363" textLength="85" lengthAdjust="spacingAndGlyphs">Deliver Proposal</text>
<text x="636" y="353" textLength="40" lengthAdjust="spacingAndGlyphs">Receive</text><text x="636" y="373" textLength="50" lengthAdjust="spacingAndGlyphs">Feedback</text>
<text x="772" y="353" textLength="60" lengthAdjust="spacingAndGlyphs">Incorporate</text><text x="772" y="373" textLength="50" lengthAdjust="spacingAndGlyphs">Feedback</text>
<text x="1053" y="353" textLength="57" lengthAdjust="spacingAndGlyphs">Commit to</text><text x="1053" y="373" textLength="38" lengthAdjust="spacingAndGlyphs">Project</text>
<text x="1190" y="353" textLength="63" lengthAdjust="spacingAndGlyphs">Create Sales</text><text x="1190" y="373" textLength="30" lengthAdjust="spacingAndGlyphs">Order</text>
<text x="1327" y="353" textLength="68" lengthAdjust="spacingAndGlyphs">Create Down</text><text x="1327" y="373" textLength="45" lengthAdjust="spacingAndGlyphs">Payment</text>
<text x="1053" y="607" textLength="85" lengthAdjust="spacingAndGlyphs">Set Opportunity</text><text x="1053" y="625" textLength="35" lengthAdjust="spacingAndGlyphs">to Lost</text>
<text x="158" y="402" textLength="18" lengthAdjust="spacingAndGlyphs">Site</text><text x="158" y="420" textLength="44" lengthAdjust="spacingAndGlyphs">Assessed</text>
<text x="508" y="292" textLength="45" lengthAdjust="spacingAndGlyphs">Changes</text><text x="508" y="313" textLength="45" lengthAdjust="spacingAndGlyphs">needed?</text>
<text x="543" y="345" textLength="18" lengthAdjust="spacingAndGlyphs">Yes</text>
<text x="945" y="292" textLength="48" lengthAdjust="spacingAndGlyphs">Agree on</text><text x="945" y="313" textLength="50" lengthAdjust="spacingAndGlyphs">Contract?</text>
<text x="1156" y="654" textLength="60" lengthAdjust="spacingAndGlyphs">Opportunity</text><text x="1156" y="671" textLength="20" lengthAdjust="spacingAndGlyphs">Lost</text>
<text x="707" y="161" textLength="52" lengthAdjust="spacingAndGlyphs">Customer</text>
<text x="693" y="145" textLength="100" lengthAdjust="spacingAndGlyphs" style="fill:#c9c9c9">Sales Representative</text>
</g>
</g>
<text transform="translate(3187,695) rotate(-90)" font-size="7" fill="#333" textLength="75" lengthAdjust="spacingAndGlyphs">Best Run Solar Company</text>
<text transform="translate(3206,688) rotate(-90)" font-size="7" fill="#333" textLength="62" lengthAdjust="spacingAndGlyphs">Sales Representative</text>
<text transform="translate(3437,660) rotate(-90)" font-size="7" fill="#333">No</text>

<!-- chips -->
<rect x="3164" y="826" width="188" height="59" rx="29.5" fill="#fff" stroke="#dddddd" stroke-width="3"/>
<text x="3192" y="864" class="b" font-size="28" fill="#6b6f74" textLength="108" lengthAdjust="spacingAndGlyphs">Revision</text>
<text x="3312" y="864" font-size="28" fill="#6b6f74" textLength="12" lengthAdjust="spacingAndGlyphs">3</text>
<rect x="3391" y="828" width="229" height="56" rx="10" fill="#fff" stroke="#5d7a9a" stroke-width="2.5"/>
<text x="3410" y="865" class="b" font-size="32" fill="#1d2d3e" textLength="94" lengthAdjust="spacingAndGlyphs">Rating</text>
<text x="3514" y="865" font-size="32" fill="#1d2d3e" textLength="87" lengthAdjust="spacingAndGlyphs">-1 / 10</text>
<rect x="3163" y="922" width="863" height="2.5" fill="#dedede"/>

<g clip-path="url(#panelc)">
<polygon points="3186,1010 3197,1010 3191.5,1017" fill="#1d2d3e"/>
<text x="3221" y="1022" class="h2" textLength="405" lengthAdjust="spacingAndGlyphs">General Information</text>
<text x="3181" y="1101" class="h3" textLength="257" lengthAdjust="spacingAndGlyphs">Linking Journeys</text>

<g fill="#0a9fc2"><rect x="3198" y="1151" width="45" height="45" rx="4"/><rect x="3198" y="1253" width="45" height="45" rx="4"/><rect x="3198" y="1590" width="45" height="45" rx="4"/></g>
<use href="#jw" x="3198" y="1151" width="45" height="45"/><use href="#jw" x="3198" y="1253" width="45" height="45"/><use href="#jw" x="3198" y="1590" width="45" height="45"/>
<text x="3261" y="1184" class="r" textLength="412" lengthAdjust="spacingAndGlyphs">Prospect to Advocate Journey</text>
<rect x="3163" y="1223" width="863" height="2.5" fill="#e2e2e2"/>
<text x="3261" y="1286" class="r" textLength="412" lengthAdjust="spacingAndGlyphs">Prospect to Advocate Journey</text>
<text x="3270" y="1333" class="d" textLength="716" lengthAdjust="spacingAndGlyphs">A visual representation of the journey undertaken by</text>
<text x="3270" y="1380" class="d" textLength="630" lengthAdjust="spacingAndGlyphs">the homeowner, as the end-user and principal</text>
<text x="3270" y="1427" class="d" textLength="694" lengthAdjust="spacingAndGlyphs">decision maker in the residential solar market, with</text>
<text x="3270" y="1473" class="d" textLength="679" lengthAdjust="spacingAndGlyphs">the goal of improving the customer experience by</text>
<text x="3270" y="1520" class="d" textLength="719" lengthAdjust="spacingAndGlyphs">combining experience data with operational insights.</text>
<rect x="3163" y="1560" width="863" height="2.5" fill="#e2e2e2"/>
<text x="3261" y="1623" class="r" textLength="624" lengthAdjust="spacingAndGlyphs">Updated Prospect to Advocate Journey (new)</text>

<polygon points="3186,1746 3197,1746 3191.5,1753" fill="#1d2d3e"/>
<text x="3221" y="1760" class="h2" textLength="192" lengthAdjust="spacingAndGlyphs">Solutions</text>
<path d="M3183 1831H3209M3189 1826L3183 1831L3189 1836M3203 1826L3209 1831L3203 1836" fill="none" stroke="#1a1a1a" stroke-width="2.4"/>
<text x="3222" y="1839" class="h3" textLength="160" lengthAdjust="spacingAndGlyphs">IT Systems</text>

<g fill="#fb4b9b"><rect x="3198" y="1888" width="45" height="45" rx="4"/><rect x="3198" y="2320" width="45" height="45" rx="4"/></g>
<use href="#bk" x="3198" y="1888" width="45" height="45"/><use href="#bk" x="3198" y="2320" width="45" height="45"/>
<text x="3261" y="1923" class="r" textLength="194" lengthAdjust="spacingAndGlyphs">SAP S/4HANA</text>
<text x="3270" y="1970" class="d" textLength="657" lengthAdjust="spacingAndGlyphs">SAP S/4HANA is a complete enterprise resource</text>
<text x="3270" y="2017" class="d" textLength="622" lengthAdjust="spacingAndGlyphs">planning (ERP) system with built-in intelligent</text>
<text x="3270" y="2064" class="d" textLength="672" lengthAdjust="spacingAndGlyphs">technologies, including AI, machine learning, and</text>
<text x="3270" y="2110" class="d" textLength="692" lengthAdjust="spacingAndGlyphs">advanced analytics. It helps companies adopt new</text>
<text x="3270" y="2157" class="d" textLength="729" lengthAdjust="spacingAndGlyphs">business models, manage business change at speed,</text>
<text x="3270" y="2204" class="d" textLength="713" lengthAdjust="spacingAndGlyphs">orchestrate internal and external resources, and use</text>
<text x="3270" y="2251" class="d" textLength="358" lengthAdjust="spacingAndGlyphs">the predictive power of AI.</text>
<rect x="3163" y="2290" width="863" height="2.5" fill="#e2e2e2"/>
<text x="3261" y="2354" class="r" textLength="240" lengthAdjust="spacingAndGlyphs">Qualtrics CoreXM</text>
<text x="3270" y="2401" class="d" style="fill:#9a9da1;stroke:#9a9da1" textLength="701" lengthAdjust="spacingAndGlyphs">Qualtrics XM combines the world's best technology</text>
<text x="3270" y="2448" class="d" style="fill:#bcbec0;stroke:#bcbec0" textLength="611" lengthAdjust="spacingAndGlyphs">for listening to feedback with automated and</text>
</g>
<rect x="3127" y="2464" width="930" height="2.5" fill="#cfcfcf"/>
<path d="M3163 2582V2522Q3163 2502 3183 2502H4006Q4026 2502 4026 2522V2582Z" fill="#08539e"/>
<text x="3449" y="2556" class="b" font-size="32" fill="#fff" textLength="290" lengthAdjust="spacingAndGlyphs">Go to diagram page</text>

<!-- app header -->
<rect x="214" y="174" width="3840" height="165" fill="#fff"/>
<rect x="214" y="339" width="2913" height="12" fill="url(#hs)"/>
<rect x="3127" y="339" width="927" height="3" fill="#dfdfdf"/>
<g fill="#1d2d3e"><rect x="283" y="238" width="51" height="6.5" rx="3"/><rect x="283" y="254" width="51" height="6.5" rx="3"/><rect x="283" y="270" width="51" height="6.5" rx="3"/></g>
<polygon points="404,226 530,226 467,289 404,289" fill="url(#sap)"/>
<text x="407" y="277" font-size="54" font-weight="700" font-style="italic" fill="#fff" stroke="#fff" stroke-width="1" textLength="91" lengthAdjust="spacingAndGlyphs">SAP</text>
<text x="527" y="275" font-size="57" fill="#0b2f8e" stroke="#0b2f8e" stroke-width="1" textLength="218" lengthAdjust="spacingAndGlyphs">Signavio</text>
<text x="870" y="275" font-size="50" fill="#1d2d3e" stroke="#1d2d3e" stroke-width="1.4" textLength="655" lengthAdjust="spacingAndGlyphs">Process Collaboration Hub</text>

<g fill="none" stroke="#6a6d70" stroke-width="4.5" stroke-linecap="round" stroke-linejoin="round">
<circle cx="3517" cy="257" r="23.5"/>
<path d="M3509 249Q3509 240 3517 240Q3526 240 3526 249Q3526 254 3520 257Q3517 259 3517 264"/>
<path d="M3647 238H3637V272H3645V282L3656 272H3682V262"/>
<ellipse cx="3666" cy="247" rx="15" ry="15"/><path d="M3659 251Q3666 257 3673 251"/>
<path d="M3782 274V256A19 22 0 0 1 3820 256V274"/><rect x="3780" y="258" width="7" height="17" rx="3"/><rect x="3815" y="258" width="7" height="17" rx="3"/><path d="M3820 275Q3820 282 3808 282"/>
</g>
<circle cx="3517" cy="271" r="3" fill="#6a6d70"/>
<g fill="#6a6d70"><circle cx="3661" cy="243" r="2.4"/><circle cx="3671" cy="243" r="2.4"/></g>
<ellipse cx="3950" cy="258" rx="52" ry="52" fill="#fff3b8"/>
<text x="3926" y="271" font-size="38" fill="#a45a00" textLength="49" lengthAdjust="spacingAndGlyphs">AH</text>
</g>
</svg>
</body></html>
